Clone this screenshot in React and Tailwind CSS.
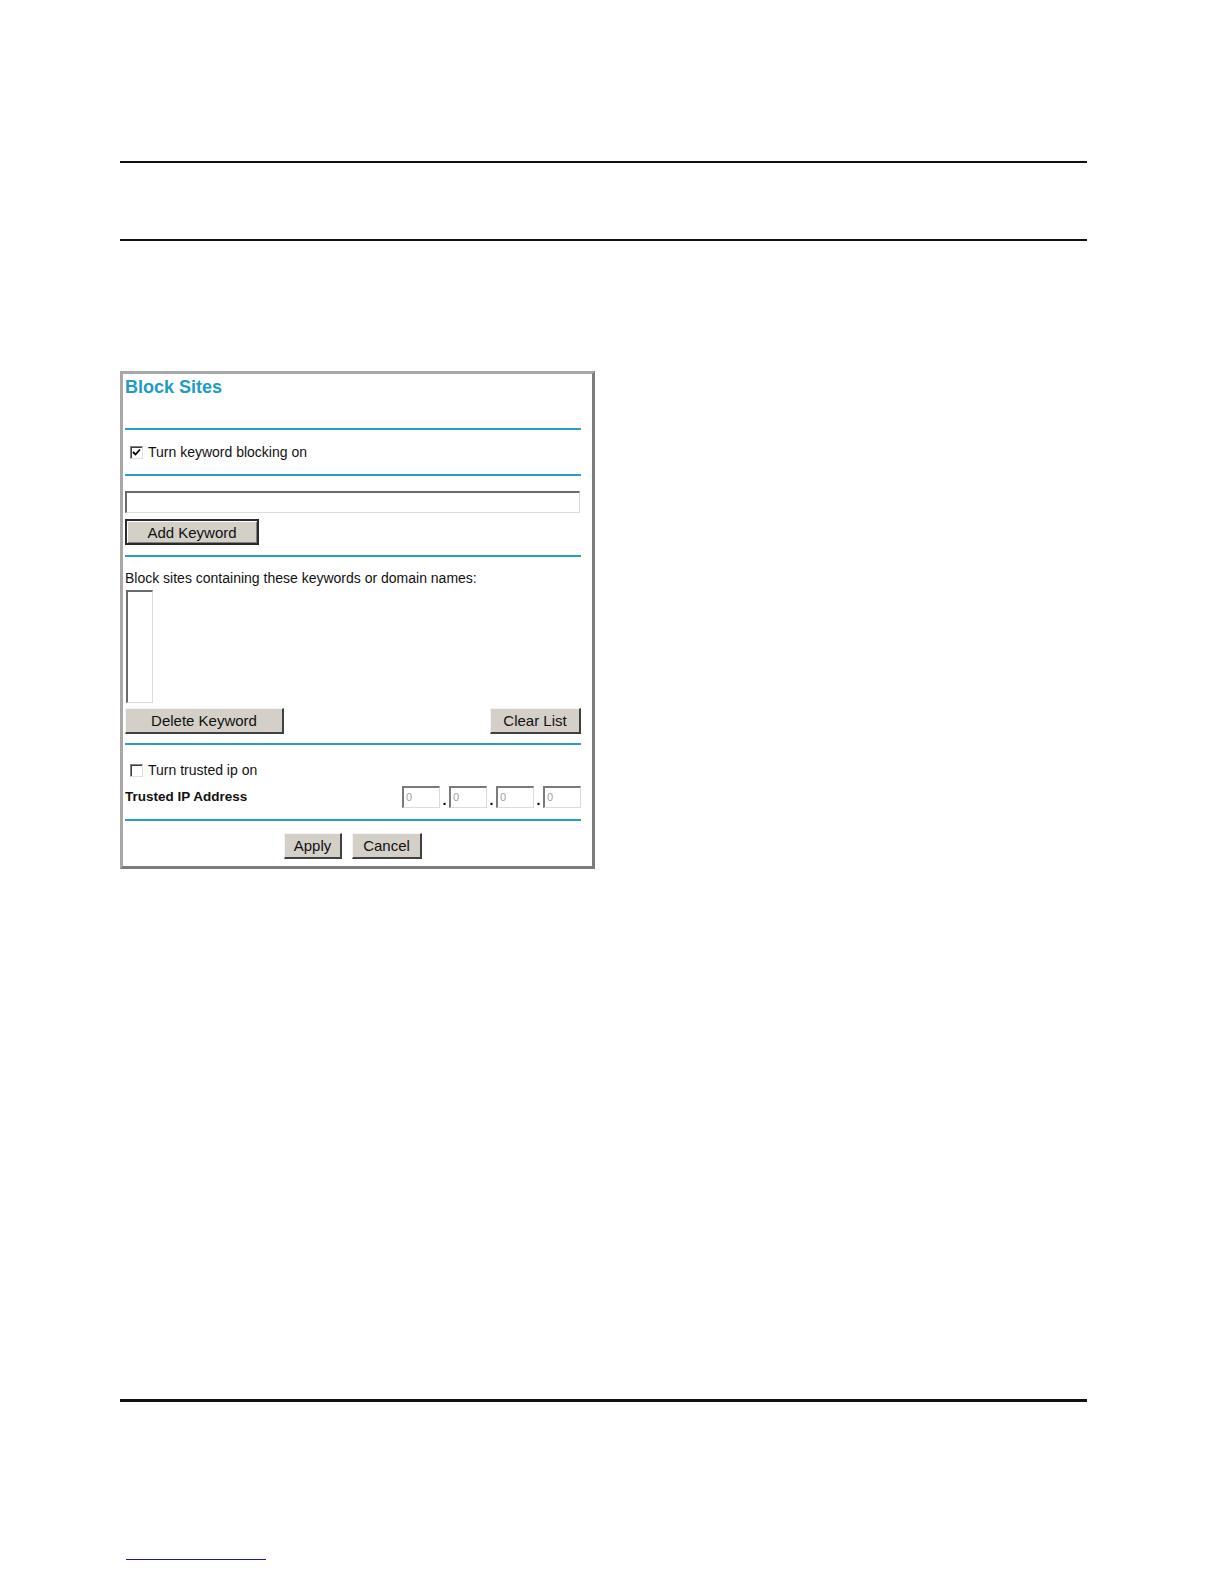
import React from "react";

const font = { fontFamily: '"Liberation Sans", Arial, sans-serif' };

function Rule() {
  return <div className="h-[2px] w-full bg-[#2a9cc3]" />;
}

function WinButton({ children, w, focused }) {
  return (
    <div
      className={
        "h-[26px] flex items-center justify-center bg-[#d4d0c8] text-[15px] text-[#111] " +
        (focused
          ? "border-2 border-[#2a2a2a] shadow-[inset_1px_1px_0_#ffffff,inset_-1px_-1px_0_#808080]"
          : "border-t border-l border-t-[#f4f4f4] border-l-[#f4f4f4] border-r-2 border-b-2 border-r-[#404040] border-b-[#404040]")
      }
      style={{ width: w }}
    >
      <span className="leading-none">{children}</span>
    </div>
  );
}

function CheckBox({ checked }) {
  return (
    <div className="w-[13px] h-[13px] bg-white border-t border-l border-t-[#808080] border-l-[#808080] border-r border-b border-r-[#e0e0e0] border-b-[#e0e0e0] shadow-[inset_1px_1px_0_#404040] flex items-center justify-center">
      {checked && (
        <svg width="9" height="9" viewBox="0 0 9 9">
          <path d="M1 4 L3.5 6.5 L8 1.5" fill="none" stroke="#000" strokeWidth="1.8" />
        </svg>
      )}
    </div>
  );
}

function IpBox() {
  return (
    <div className="w-[38px] h-[22px] bg-white border-t-2 border-l-2 border-t-[#7a7a7a] border-l-[#7a7a7a] border-r border-b border-r-[#dcdcdc] border-b-[#dcdcdc] flex items-center pl-[2px] text-[11px] text-[#a0a0a0]">
      0
    </div>
  );
}

export default function App() {
  return (
    <div className="w-[1224px] h-[1584px] bg-white" style={font}>
      <div className="ml-[120px] w-[967px] pt-[161px]">
        <div className="h-[2px] bg-[#111]" />
        <div className="h-[76px]" />
        <div className="h-[2px] bg-[#111]" />
        <div className="h-[130px]" />

        {/* Panel */}
        <div className="w-[475px] h-[498px] bg-white border-t-[3px] border-l-[3px] border-t-[#a8a8a8] border-l-[#a8a8a8] border-r-[3px] border-b-[3px] border-r-[#7c7c7c] border-b-[#7c7c7c] pl-[2px] pr-[11px] flex flex-col">
          <div className="h-[54px] pt-[3px]">
            <div className="text-[18px] font-bold text-[#1e9cc2] leading-[21px]">Block Sites</div>
          </div>
          <Rule />
          <div className="h-[44px] flex items-center pl-[5px] gap-[5px]">
            <CheckBox checked />
            <span className="text-[14px] text-[#111] leading-none">Turn keyword blocking on</span>
          </div>
          <Rule />
          <div className="mt-[15px] h-[22px] w-[455px] bg-white border-t-2 border-l-2 border-t-[#6a6a6a] border-l-[#6a6a6a] border-r border-b border-r-[#dcdcdc] border-b-[#dcdcdc]" />
          <div className="mt-[6px]">
            <WinButton w={134} focused>
              Add Keyword
            </WinButton>
          </div>
          <div className="mt-[10px]">
            <Rule />
          </div>
          <div className="mt-[13px] h-[16px] flex items-center text-[14px] text-[#111] leading-none">
            Block sites containing these keywords or domain names:
          </div>
          <div className="mt-[4px] ml-[1px] w-[27px] h-[113px] bg-white border-t-2 border-l-2 border-t-[#6a6a6a] border-l-[#6a6a6a] border-r border-b border-r-[#dcdcdc] border-b-[#dcdcdc]" />
          <div className="mt-[5px] flex justify-between">
            <WinButton w={159}>Delete Keyword</WinButton>
            <WinButton w={91}>Clear List</WinButton>
          </div>
          <div className="mt-[9px]">
            <Rule />
          </div>
          <div className="mt-[17px] h-[16px] flex items-center pl-[5px] gap-[5px]">
            <CheckBox />
            <span className="text-[14px] text-[#111] leading-none">Turn trusted ip on</span>
          </div>
          <div className="mt-[8px] h-[22px] flex items-center justify-between">
            <span className="text-[13.5px] font-bold text-[#111] leading-none">Trusted IP Address</span>
            <div className="flex items-center">
              <IpBox />
              <span className="w-[9px] text-center text-[14px] font-bold self-end leading-[16px]">.</span>
              <IpBox />
              <span className="w-[9px] text-center text-[14px] font-bold self-end leading-[16px]">.</span>
              <IpBox />
              <span className="w-[9px] text-center text-[14px] font-bold self-end leading-[16px]">.</span>
              <IpBox />
            </div>
          </div>
          <div className="mt-[11px]">
            <Rule />
          </div>
          <div className="mt-[12px] flex justify-center gap-[10px]">
            <WinButton w={58}>Apply</WinButton>
            <WinButton w={70}>Cancel</WinButton>
          </div>
        </div>

        <div className="h-[530px]" />
        <div className="h-[3px] bg-[#111]" />
        <div className="h-[157px]" />
        <div className="ml-[6px] w-[140px] h-[1px] bg-[#1a1aa0]" />
      </div>
    </div>
  );
}
